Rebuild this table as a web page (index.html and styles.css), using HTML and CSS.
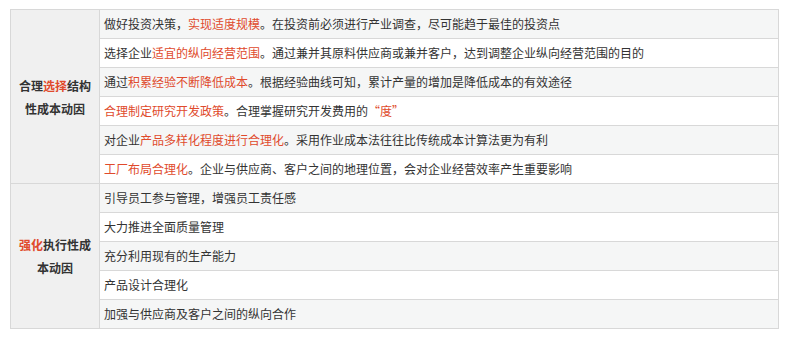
FILE: index.html
```html
<!DOCTYPE html>
<html lang="zh-CN">
<head>
    <meta charset="UTF-8">
    <title>成本动因</title>
    <link rel="stylesheet" href="styles.css">
</head>
<body>
<table class="drivers">
    <tr>
        <th rowspan="6">合理<span class="hl">选择</span>结构性成本动因</th>
        <td>做好投资决策，<span class="hl">实现适度规模</span>。在投资前必须进行产业调查，尽可能趋于最佳的投资点</td>
    </tr>
    <tr>
        <td>选择企业<span class="hl">适宜的纵向经营范围</span>。通过兼并其原料供应商或兼并客户，达到调整企业纵向经营范围的目的</td>
    </tr>
    <tr>
        <td>通过<span class="hl">积累经验不断降低成本</span>。根据经验曲线可知，累计产量的增加是降低成本的有效途径</td>
    </tr>
    <tr>
        <td><span class="hl">合理制定研究开发政策</span>。合理掌握研究开发费用的<span class="hl">“度”</span></td>
    </tr>
    <tr>
        <td>对企业<span class="hl">产品多样化程度进行合理化</span>。采用作业成本法往往比传统成本计算法更为有利</td>
    </tr>
    <tr>
        <td><span class="hl">工厂布局合理化</span>。企业与供应商、客户之间的地理位置，会对企业经营效率产生重要影响</td>
    </tr>
    <tr>
        <th rowspan="5"><span class="hl">强化</span>执行性成本动因</th>
        <td>引导员工参与管理，增强员工责任感</td>
    </tr>
    <tr>
        <td>大力推进全面质量管理</td>
    </tr>
    <tr>
        <td>充分利用现有的生产能力</td>
    </tr>
    <tr>
        <td>产品设计合理化</td>
    </tr>
    <tr>
        <td>加强与供应商及客户之间的纵向合作</td>
    </tr>
</table>
</body>
</html>
```

FILE: styles.css
```css
body {
    margin: 0;
    padding: 9px 10px;
    background-color: #fff;
    font-family: "Noto Sans CJK SC", "Liberation Sans", sans-serif;
    font-size: 12px;
    color: #333;
}

.drivers {
    width: 769px;
    border-collapse: collapse;
    border: 1px solid #d8d8d8;
}

.drivers th {
    width: 76px;
    padding: 0 6px;
    background-color: #f0f0f0;
    border: 1px solid #d8d8d8;
    font-weight: bold;
    line-height: 23px;
    text-align: center;
    color: #333;
}

.drivers td {
    height: 28px;
    padding: 0 4px;
    border: 1px solid #d8d8d8;
    line-height: 16px;
}

.drivers tr:nth-child(odd) td {
    background-color: #f5f6f6;
}

.hl {
    color: #e04a2c;
}
```
